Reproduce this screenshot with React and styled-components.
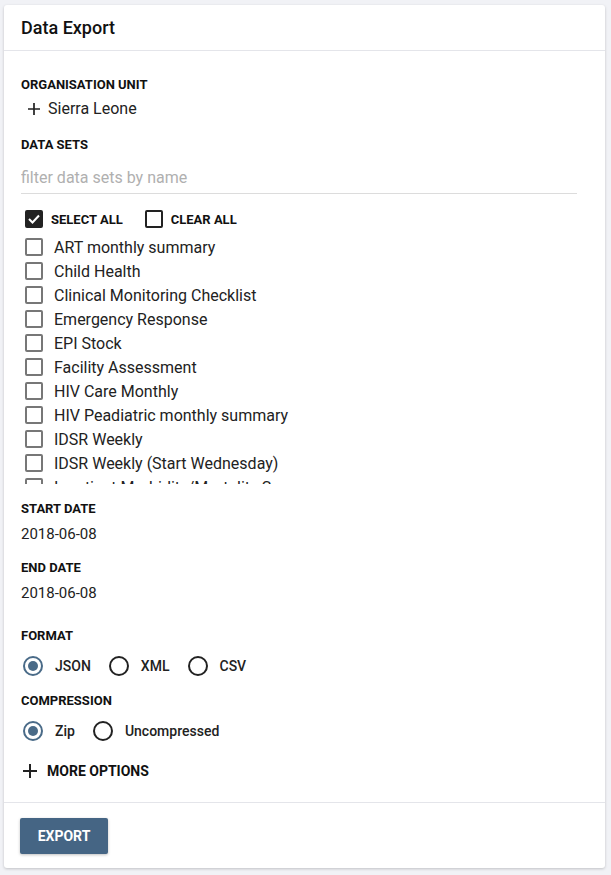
import styled, { createGlobalStyle } from 'styled-components';

const GlobalStyle = createGlobalStyle`
  html, body {
    margin: 0;
    padding: 0;
    background: #f1f2f6;
    font-family: Roboto, "Liberation Sans", sans-serif;
    color: #212121;
  }
`;

const Page = styled.div`
  padding: 5px 6px 8px 4px;
`;

const Card = styled.div`
  background: #fff;
  border-radius: 3px;
  box-shadow: 0 1px 3px rgba(0, 0, 0, 0.2);
`;

const Header = styled.div`
  height: 45px;
  padding: 0 17px;
  display: flex;
  align-items: center;
  font-size: 18px;
  font-weight: 500;
  color: #111;
  border-bottom: 1px solid #e4e5ea;
`;

const Body = styled.div`
  padding: 27px 28px 23px 17px;
`;

const Label = styled.div`
  font-size: 13px;
  font-weight: 700;
  color: #111;
  text-transform: uppercase;
  margin-top: ${({ $gap }) => $gap || 0}px;
  line-height: 14px;
`;

const OrgRow = styled.div`
  display: flex;
  align-items: center;
  gap: 8px;
  margin-top: 7px;
  padding-left: 7px;
  font-size: 16px;
  color: #222;
`;

const FilterInput = styled.input`
  display: block;
  width: 100%;
  box-sizing: border-box;
  margin-top: 10px;
  border: none;
  border-bottom: 1px solid #dcdcdc;
  padding: 6px 0 6px;
  font-family: inherit;
  font-size: 16px;
  outline: none;
  &::placeholder {
    color: #b0b0b0;
  }
`;

const BulkRow = styled.div`
  display: flex;
  align-items: center;
  gap: 22px;
  margin-top: 16px;
  padding-left: 4px;
`;

const BulkItem = styled.label`
  display: flex;
  align-items: center;
  gap: 8px;
  font-size: 13px;
  font-weight: 700;
  color: #111;
`;

const Box = styled.span`
  box-sizing: border-box;
  width: 18px;
  height: 18px;
  border-radius: 2px;
  border: 2px solid ${({ $checked, $dark }) => ($checked || $dark ? '#222' : '#777')};
  background: ${({ $checked }) => ($checked ? '#222' : '#fff')};
  display: flex;
  align-items: center;
  justify-content: center;
  flex-shrink: 0;
`;

const List = styled.div`
  margin-top: 7px;
  height: 249px;
  overflow: hidden;
`;

const Item = styled.label`
  display: flex;
  align-items: center;
  height: 24px;
  padding-left: 4px;
  gap: 11px;
  font-size: 16px;
  color: #222;
  white-space: nowrap;
`;

const Value = styled.div`
  font-size: 15px;
  color: #222;
  margin-top: 9px;
`;

const RadioRow = styled.div`
  display: flex;
  align-items: center;
  margin-top: 13px;
  padding-left: 2px;
`;

const RadioItem = styled.label`
  display: flex;
  align-items: center;
  gap: 12px;
  margin-right: 18px;
  font-size: 14px;
  font-weight: 500;
  color: #222;
`;

const Circle = styled.span`
  box-sizing: border-box;
  width: 20px;
  height: 20px;
  border-radius: 50%;
  border: 2px solid ${({ $on }) => ($on ? '#4a6b88' : '#222')};
  display: flex;
  align-items: center;
  justify-content: center;
  &::after {
    content: '';
    width: 10px;
    height: 10px;
    border-radius: 50%;
    background: ${({ $on }) => ($on ? '#4a6b88' : 'transparent')};
  }
`;

const MoreRow = styled.div`
  display: flex;
  align-items: center;
  gap: 10px;
  margin-top: 22px;
  padding-left: 2px;
  font-size: 14px;
  font-weight: 700;
  color: #111;
`;

const Footer = styled.div`
  border-top: 1px solid #e4e5ea;
  padding: 15px 16px 14px;
`;

const Button = styled.button`
  background: #456584;
  color: #fff;
  border: none;
  border-radius: 2px;
  height: 36px;
  width: 88px;
  font-family: inherit;
  font-size: 14px;
  font-weight: 700;
  box-shadow: 0 1px 3px rgba(0, 0, 0, 0.25);
`;

const Plus = ({ size = 14 }) => (
  <svg width={size} height={size} viewBox="0 0 14 14">
    <path d="M7 0v14M0 7h14" stroke="#222" strokeWidth="2" />
  </svg>
);

const Check = () => (
  <svg width="12" height="10" viewBox="0 0 12 10">
    <path d="M1 5l3.5 3.5L11 1.5" stroke="#fff" strokeWidth="2" fill="none" />
  </svg>
);

const dataSets = [
  'ART monthly summary',
  'Child Health',
  'Clinical Monitoring Checklist',
  'Emergency Response',
  'EPI Stock',
  'Facility Assessment',
  'HIV Care Monthly',
  'HIV Peadiatric monthly summary',
  'IDSR Weekly',
  'IDSR Weekly (Start Wednesday)',
  'Inpatient Morbidity/Mortality Summary',
  'Life-Saving Commodities',
];

export default function App() {
  return (
    <>
      <GlobalStyle />
      <Page>
        <Card>
          <Header>Data Export</Header>
          <Body>
            <Label>Organisation unit</Label>
            <OrgRow>
              <Plus size={12} />
              Sierra Leone
            </OrgRow>
            <Label $gap={20}>Data sets</Label>
            <FilterInput placeholder="filter data sets by name" />
            <BulkRow>
              <BulkItem>
                <Box $checked><Check /></Box>
                SELECT ALL
              </BulkItem>
              <BulkItem>
                <Box $dark />
                CLEAR ALL
              </BulkItem>
            </BulkRow>
            <List>
              {dataSets.map((name) => (
                <Item key={name}>
                  <Box />
                  {name}
                </Item>
              ))}
            </List>
            <Label $gap={18}>Start date</Label>
            <Value>2018-06-08</Value>
            <Label $gap={18}>End date</Label>
            <Value>2018-06-08</Value>
            <Label $gap={27}>Format</Label>
            <RadioRow>
              <RadioItem><Circle $on />JSON</RadioItem>
              <RadioItem><Circle />XML</RadioItem>
              <RadioItem><Circle />CSV</RadioItem>
            </RadioRow>
            <Label $gap={18}>Compression</Label>
            <RadioRow>
              <RadioItem><Circle $on />Zip</RadioItem>
              <RadioItem><Circle />Uncompressed</RadioItem>
            </RadioRow>
            <MoreRow>
              <Plus />
              MORE OPTIONS
            </MoreRow>
          </Body>
          <Footer>
            <Button>EXPORT</Button>
          </Footer>
        </Card>
      </Page>
    </>
  );
}
